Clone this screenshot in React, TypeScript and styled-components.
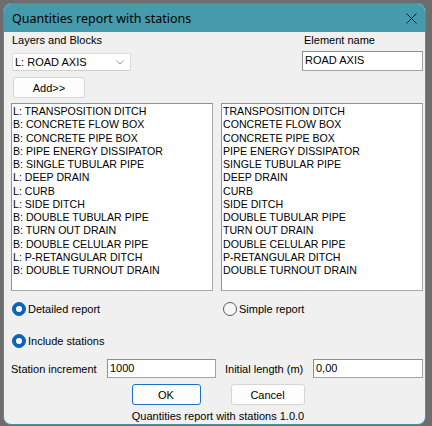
import React from "react";
import styled, { createGlobalStyle } from "styled-components";

const Global = createGlobalStyle`
  html, body { margin: 0; padding: 0; background: #6d6d6d; }
  body { font-family: "Liberation Sans", Arial, sans-serif; }
  * { box-sizing: border-box; }
`;

const Desktop = styled.div`
  width: 432px;
  height: 426px;
  padding: 3px 0 0 3px;
`;

const Window = styled.div`
  width: 423px;
  height: 422px;
  border: 1px solid #3f95a6;
  border-radius: 8px;
  overflow: hidden;
  background: #f0f0f0;
  display: flex;
  flex-direction: column;
`;

const TitleBar = styled.div`
  height: 28px;
  flex: none;
  background: #459bab;
  display: flex;
  align-items: center;
  justify-content: space-between;
  padding: 0 8px 0 8px;
  font-family: "Noto Sans", "Open Sans", sans-serif;
  font-size: 12.5px;
  color: #000;
`;

const CloseBtn = styled.div`
  width: 12px;
  height: 12px;
  display: flex;
  align-items: center;
  justify-content: center;
`;

const Client = styled.div`
  flex: 1;
  display: flex;
  flex-direction: column;
  padding: 0 2px 0 7px;
  font-size: 10.6px;
  color: #000;
`;

const TopSection = styled.div`
  display: grid;
  grid-template-columns: 120px 1fr 121px;
  height: 70px;
`;

const Column = styled.div`
  display: flex;
  flex-direction: column;
`;

const Label = styled.div<{ $pl?: number }>`
  height: 14px;
  line-height: 14px;
  margin-top: 1px;
  padding-left: ${(p) => p.$pl ?? 1}px;
  font-size: 11px;
  white-space: nowrap;
`;

const Combo = styled.div`
  margin-top: 6px;
  margin-left: 1px;
  height: 18px;
  background: #fff;
  border: 1px solid #dcdcdc;
  border-bottom-color: #cfcfcf;
  border-radius: 2px;
  display: flex;
  align-items: center;
  justify-content: space-between;
  padding: 0 6px 0 2px;
  font-size: 11px;
`;

const Button = styled.div<{ $w: number; $default?: boolean }>`
  width: ${(p) => p.$w}px;
  height: 21px;
  background: #fdfdfd;
  border: 1px solid ${(p) => (p.$default ? "#1a73c6" : "#d6d6d6")};
  border-radius: 3px;
  display: flex;
  align-items: center;
  justify-content: center;
  font-size: 11px;
`;

const AddWrap = styled.div`
  margin-top: 6px;
  margin-left: 2px;
`;

const TextBox = styled.div<{ $w: number; $h?: number }>`
  width: ${(p) => p.$w}px;
  height: ${(p) => p.$h ?? 20}px;
  flex: none;
  background: #fff;
  border: 1px solid #a3a3a3;
  border-top-color: #8f8f8f;
  border-left-color: #8f8f8f;
  padding: 1px 2px;
  font-size: 11px;
  line-height: 14px;
`;

const NameBox = styled(TextBox)`
  margin-top: 4px;
`;

const Lists = styled.div`
  margin-top: 1px;
  display: grid;
  grid-template-columns: 202px 202px;
  column-gap: 8px;
`;

const ListBox = styled.div`
  height: 188px;
  background: #fff;
  border: 1px solid #a8a8a8;
  border-top-color: #939393;
  border-left-color: #939393;
  padding: 1px 0 0 1px;
`;

const ListItem = styled.div`
  height: 13.25px;
  line-height: 13.25px;
  font-size: 10.6px;
  white-space: nowrap;
`;

const RadioRow = styled.div<{ $mt: number }>`
  margin-top: ${(p) => p.$mt}px;
  display: grid;
  grid-template-columns: 210px 201px;
  height: 16px;
`;

const RadioItem = styled.div<{ $pl: number }>`
  display: flex;
  align-items: center;
  gap: 2px;
  padding-left: ${(p) => p.$pl}px;
  font-size: 11px;
`;

const RadioCircle = styled.span<{ $on?: boolean }>`
  width: 14px;
  height: 14px;
  border-radius: 50%;
  flex: none;
  display: flex;
  align-items: center;
  justify-content: center;
  background: ${(p) => (p.$on ? "#0a64b8" : "#f6f6f6")};
  border: 1px solid ${(p) => (p.$on ? "#0a64b8" : "#5a5a5a")};
  &::after {
    content: "";
    display: ${(p) => (p.$on ? "block" : "none")};
    width: 6px;
    height: 6px;
    border-radius: 50%;
    background: #fff;
  }
`;

const FieldRow = styled.div`
  margin-top: 10px;
  display: flex;
  align-items: center;
  height: 19px;
`;

const FieldLabel = styled.div<{ $w: number; $pl?: number }>`
  width: ${(p) => p.$w}px;
  flex: none;
  padding-left: ${(p) => p.$pl ?? 0}px;
  font-size: 11px;
  white-space: nowrap;
`;

const Buttons = styled.div`
  margin-top: 6px;
  display: flex;
  justify-content: center;
  gap: 30px;
  padding-left: 2px;
`;

const Footer = styled.div`
  margin-top: 4px;
  text-align: center;
  font-size: 11px;
  line-height: 14px;
  padding-left: 2px;
`;

const leftItems = [
  "L: TRANSPOSITION DITCH",
  "B: CONCRETE FLOW BOX",
  "B: CONCRETE PIPE BOX",
  "B: PIPE ENERGY DISSIPATOR",
  "B: SINGLE TUBULAR PIPE",
  "L: DEEP DRAIN",
  "L: CURB",
  "L: SIDE DITCH",
  "B: DOUBLE TUBULAR PIPE",
  "B: TURN OUT DRAIN",
  "B: DOUBLE CELULAR PIPE",
  "L: P-RETANGULAR DITCH",
  "B: DOUBLE TURNOUT DRAIN",
];

const rightItems = leftItems.map((s) => s.slice(3));

export default function App() {
  return (
    <Desktop>
      <Global />
      <Window>
        <TitleBar>
          <span>Quantities report with stations</span>
          <CloseBtn>
            <svg width="11" height="11" viewBox="0 0 11 11">
              <path d="M0.5 0.5 L10.5 10.5 M10.5 0.5 L0.5 10.5" stroke="#111" strokeWidth="1" />
            </svg>
          </CloseBtn>
        </TitleBar>
        <Client>
          <TopSection>
            <Column>
              <Label $pl={1}>Layers and Blocks</Label>
              <Combo>
                <span>L: ROAD AXIS</span>
                <svg width="8" height="5" viewBox="0 0 8 5">
                  <path d="M0.5 0.5 L4 4 L7.5 0.5" stroke="#9a9a9a" fill="none" strokeWidth="1" />
                </svg>
              </Combo>
              <AddWrap>
                <Button $w={72}>Add&gt;&gt;</Button>
              </AddWrap>
            </Column>
            <div />
            <Column>
              <Label $pl={2}>Element name</Label>
              <NameBox $w={121}>ROAD AXIS</NameBox>
            </Column>
          </TopSection>
          <Lists>
            <ListBox>
              {leftItems.map((s) => (
                <ListItem key={s}>{s}</ListItem>
              ))}
            </ListBox>
            <ListBox>
              {rightItems.map((s) => (
                <ListItem key={s}>{s}</ListItem>
              ))}
            </ListBox>
          </Lists>
          <RadioRow $mt={10}>
            <RadioItem $pl={1}>
              <RadioCircle $on />
              <span>Detailed report</span>
            </RadioItem>
            <RadioItem $pl={2}>
              <RadioCircle />
              <span>Simple report</span>
            </RadioItem>
          </RadioRow>
          <RadioRow $mt={16}>
            <RadioItem $pl={1}>
              <RadioCircle $on />
              <span>Include stations</span>
            </RadioItem>
          </RadioRow>
          <FieldRow>
            <FieldLabel $w={96}>Station increment</FieldLabel>
            <TextBox $w={109} $h={19}>1000</TextBox>
            <FieldLabel $w={97} $pl={9}>Initial length (m)</FieldLabel>
            <TextBox $w={110} $h={19}>0,00</TextBox>
          </FieldRow>
          <Buttons>
            <Button $w={69} $default>OK</Button>
            <Button $w={74}>Cancel</Button>
          </Buttons>
          <Footer>Quantities report with stations 1.0.0</Footer>
        </Client>
      </Window>
    </Desktop>
  );
}
